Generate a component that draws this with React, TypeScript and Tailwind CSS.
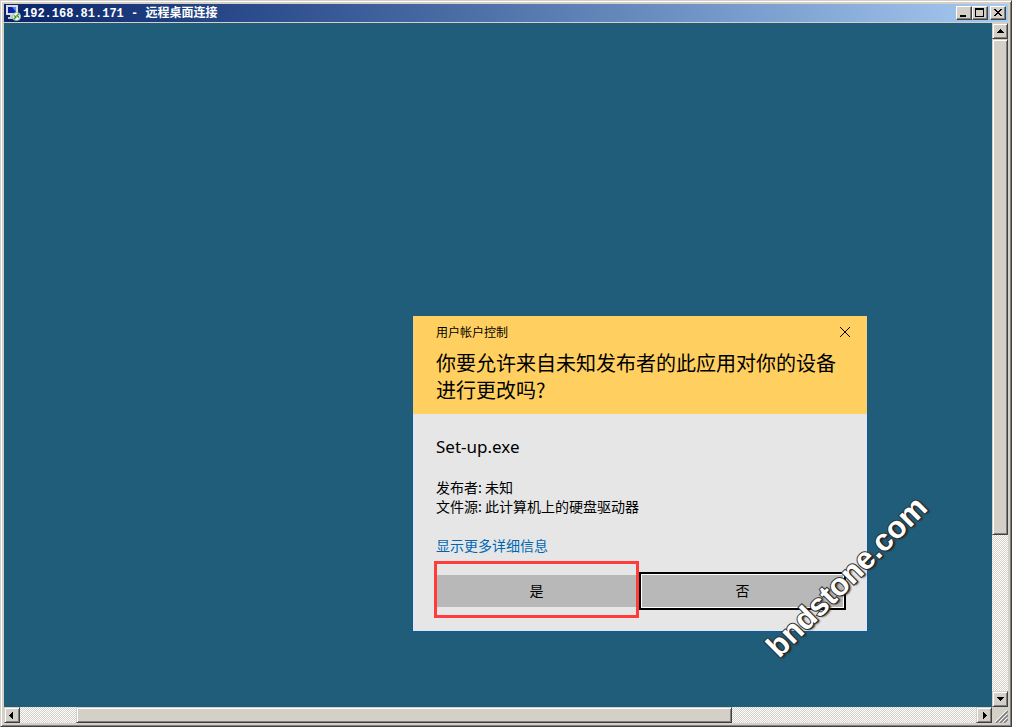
import React, { useState } from 'react'

type Direction = 'up' | 'down' | 'left' | 'right'

const arrows: Record<Direction, string> = {
    up: 'M6 4h1v1h1v1h1v1h1v1H3V7h1V6h1V5h1z',
    down: 'M3 4h7v1H9v1H8v1H7v1H6V7H5V6H4V5H3z',
    left: 'M7 3v7H6V9H5V8H4V7H3V6h1V5h1V4h1V3z',
    right: 'M5 3v7h1V9h1V8h1V7h1V6H8V5H7V4H6V3z',
}

const raised =
    'bg-[#d4d0c8] border border-t-[#d4d0c8] border-l-[#d4d0c8] border-b-[#404040] border-r-[#404040] shadow-[inset_1px_1px_0_#fff,inset_-1px_-1px_0_#808080]'

const captionButton =
    'flex h-3.5 w-4 items-center justify-center bg-[#d4d0c8] border border-t-white border-l-white border-b-[#404040] border-r-[#404040] shadow-[inset_-1px_-1px_0_#808080]'

const track = 'bg-[conic-gradient(#fff_25%,#d4d0c8_0_50%,#fff_0_75%,#d4d0c8_0)] bg-size-[2px_2px]'

function ScrollButton({ direction }: { direction: Direction }) {
    return (
        <button aria-label={`Scroll ${direction}`} className={`flex size-4 shrink-0 items-center justify-center ${raised}`}>
            <svg width="12" height="12" viewBox="0 0 12 12" shapeRendering="crispEdges" className="shrink-0">
                <path d={arrows[direction]} />
            </svg>
        </button>
    )
}

function RemoteIcon() {
    return (
        <svg width="16" height="16" viewBox="0 0 16 16" className="shrink-0">
            <path d="M1 0h12v10H1z" fill="#dcdcd6" />
            <path d="M3 2h8v6H3z" fill="#0a22b0" />
            <path d="M7 2h4v5C10 6 9 4 7 2z" fill="#5c86ee" />
            <path d="M5 10h4v1h2v3H3v-2h2z" fill="#c9c9c1" />
            <circle cx="11.5" cy="11.5" r="4" fill="#f2f5ee" stroke="#a9b7a4" />
            <path d="M9 10.5l2 1.5-2 2M14 9l-2 1.5 2 2" fill="none" stroke="#239b2d" strokeWidth="1.3" />
        </svg>
    )
}

function TitleBar() {
    return (
        <header className="flex h-[18px] shrink-0 items-center bg-linear-to-r from-[#0a246a] to-[#a6caf0] pr-0.5 pl-px">
            <RemoteIcon />
            <h1 className="ml-0.5 flex-1 truncate pt-0.5 font-['Liberation_Mono','Noto_Sans_CJK_SC',monospace] text-xs font-bold text-white">
                192.168.81.171 - 远程桌面连接
            </h1>
            <div className="flex">
                <button aria-label="Minimize" className={captionButton}>
                    <svg width="12" height="10" shapeRendering="crispEdges" className="shrink-0">
                        <path d="M2 7h6v2H2z" />
                    </svg>
                </button>
                <button aria-label="Maximize" className={captionButton}>
                    <svg width="12" height="10" shapeRendering="crispEdges" className="shrink-0">
                        <path d="M1 0h9v9H1zM2 2v6h7V2z" fillRule="evenodd" />
                    </svg>
                </button>
                <button aria-label="Close" className={`ml-0.5 ${captionButton}`}>
                    <svg width="12" height="10" shapeRendering="crispEdges" className="shrink-0">
                        <path d="M2 1h2v1h1v1h2V2h1V1h2v1H9v1H8v1H7v1h1v1h1v1h1v1H8V7H7V6H5v1H4v1H2V7h1V6h1V5h1V4H4V3H3V2H2z" />
                    </svg>
                </button>
            </div>
        </header>
    )
}

function UacDialog({ onAnswer }: { onAnswer: () => void }) {
    return (
        <section
            role="dialog"
            aria-labelledby="uac-question"
            className="absolute top-[293px] left-[408px] w-[456px] border-x border-b border-[#0c5aa6] bg-[#e6e6e6] text-black"
        >
            <div className="bg-[#ffd060] px-[23px] pt-2 pb-[11px]">
                <div className="flex h-4 items-center justify-between">
                    <span className="text-xs">用户帐户控制</span>
                    <button aria-label="关闭" className="-mr-[9px] flex size-4 items-center justify-center" onClick={onAnswer}>
                        <svg width="12" height="12" viewBox="0 0 12 12" fill="none" stroke="#000">
                            <path d="M1 1l10 10M11 1L1 11" />
                        </svg>
                    </button>
                </div>
                <h2 id="uac-question" className="mt-[9px] text-xl leading-[27px] font-normal">
                    你要允许来自未知发布者的此应用对你的设备进行更改吗?
                </h2>
            </div>
            <div className="px-[23px] pt-5 pb-[13px]">
                <p className="font-['Noto_Sans',sans-serif] text-[17px] leading-[26px]">Set-up.exe</p>
                <div className="mt-[18px] text-sm leading-[19px]">
                    <p>发布者: 未知</p>
                    <p>文件源: 此计算机上的硬盘驱动器</p>
                </div>
                <a href="#details" className="mt-5 block text-sm leading-[19px] text-[#0066b4]">显示更多详细信息</a>
                <div className="-mx-0.5 mt-1.5 flex items-start">
                    <div className="w-[205px] border-3 border-[#ff3b3b] pt-[11px] pb-2">
                        <button className="block h-8 w-full bg-[#b8b8b8] pb-0.5 text-sm" onClick={onAnswer}>是</button>
                    </div>
                    <button
                        className="mt-[11px] h-[38px] flex-1 border-2 border-black bg-[#b8b8b8] pb-0.5 text-sm shadow-[inset_0_0_0_1px_#fff]"
                        onClick={onAnswer}
                    >
                        否
                    </button>
                </div>
            </div>
        </section>
    )
}

export default function App() {
    const [open, setOpen] = useState(true)

    return (
        <div className="flex h-screen flex-col border border-t-[#d4d0c8] border-l-[#d4d0c8] border-b-[#404040] border-r-[#404040] bg-[#d4d0c8] p-[3px] font-['Noto_Sans_CJK_SC',sans-serif] shadow-[inset_1px_1px_0_#fff,inset_-1px_-1px_0_#808080]">
            <TitleBar />
            <div className="mt-px flex min-h-0 flex-1">
                <main className="relative min-w-0 flex-1 overflow-hidden bg-[#205d7a]">
                    {open && <UacDialog onAnswer={() => setOpen(false)} />}
                    <span className="absolute top-[536px] left-[737px] -rotate-45 font-['Liberation_Sans',sans-serif] text-[31px] leading-9 font-bold whitespace-nowrap text-white [-webkit-text-stroke:2px_#333] [paint-order:stroke_fill] [text-shadow:1px_2px_2px_#222]">
                        bndstone.com
                    </span>
                </main>
                <div className={`flex w-4 shrink-0 flex-col ${track}`}>
                    <ScrollButton direction="up" />
                    <div className={`flex-[496] ${raised}`} />
                    <div className="flex-[156]" />
                    <ScrollButton direction="down" />
                </div>
            </div>
            <div className="flex h-4 shrink-0">
                <div className={`flex min-w-0 flex-1 ${track}`}>
                    <ScrollButton direction="left" />
                    <div className="flex-[56]" />
                    <div className={`flex-[654] ${raised}`} />
                    <div className="flex-[244]" />
                    <ScrollButton direction="right" />
                </div>
                <svg width="16" height="16" viewBox="0 0 16 16" fill="none" className="shrink-0">
                    <path d="M4 16L16 4M8 16l8-8M12 16l4-4" stroke="#808080" strokeWidth="1.6" />
                    <path d="M3 15L15 3M7 15l8-8M11 15l4-4" stroke="#fff" />
                </svg>
            </div>
        </div>
    )
}
